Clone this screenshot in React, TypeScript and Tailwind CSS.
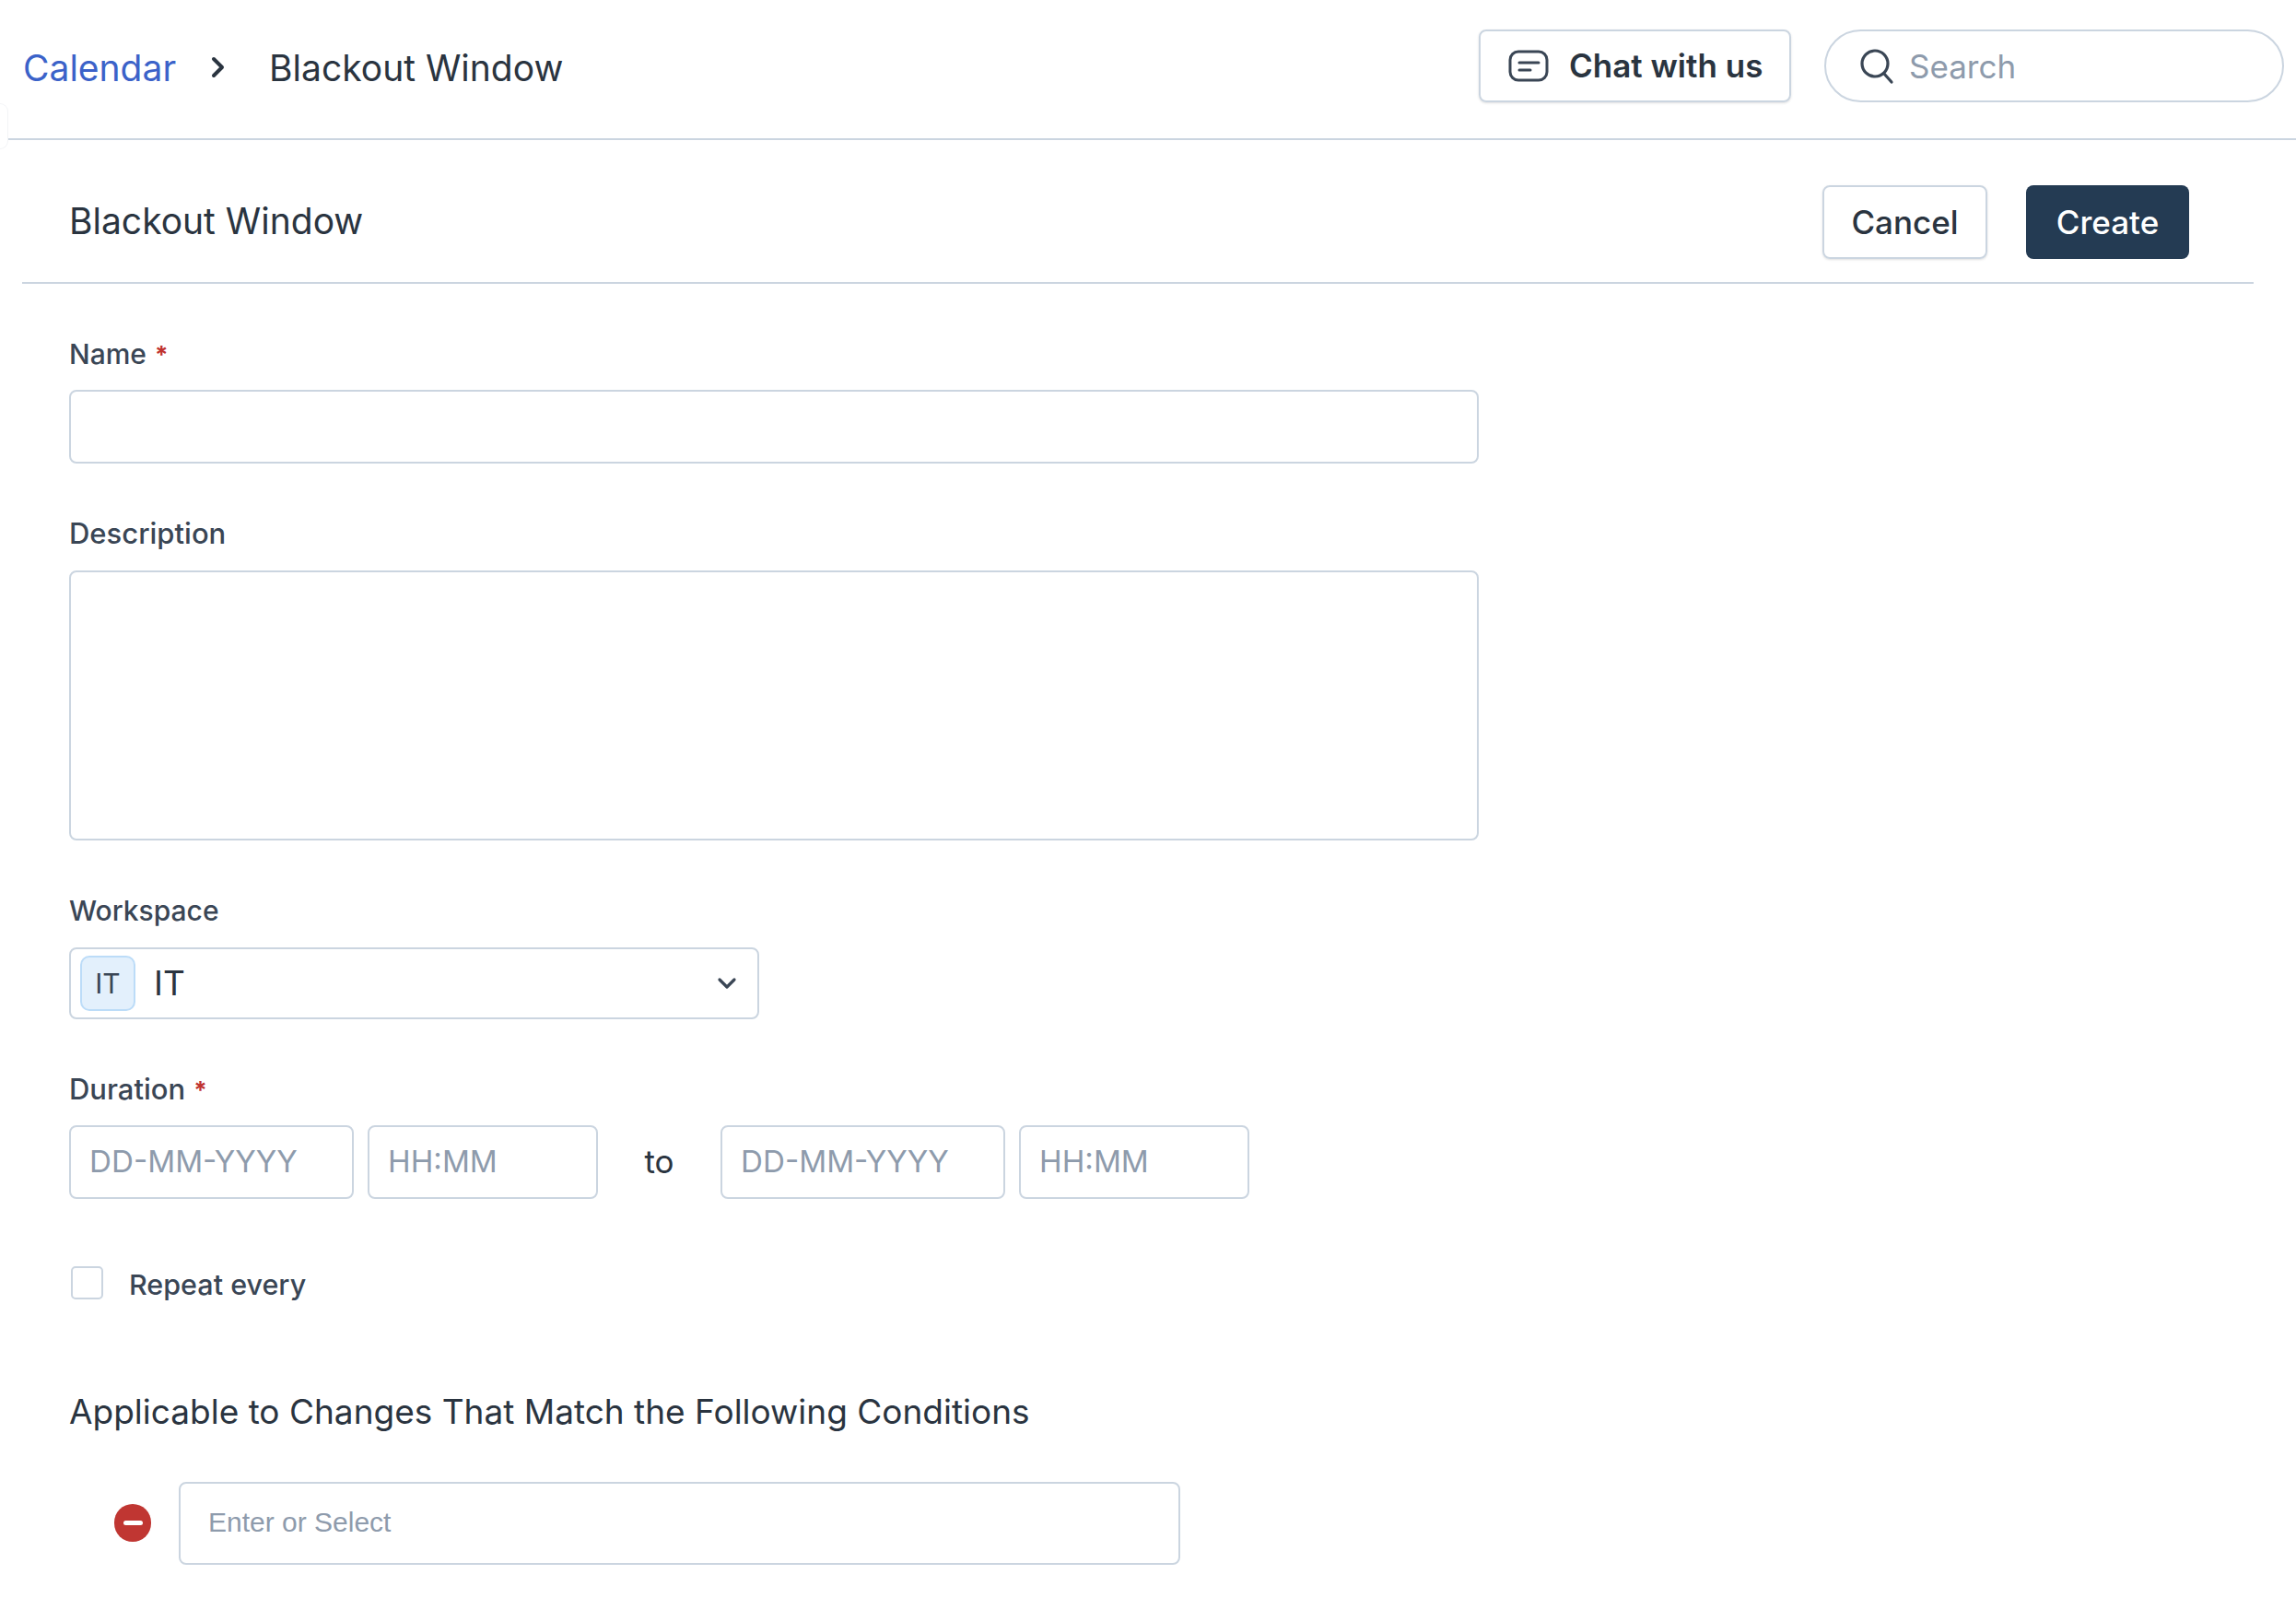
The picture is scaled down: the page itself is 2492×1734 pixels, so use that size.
import React from "react";

const font = { fontFamily: "Inter, 'Liberation Sans', sans-serif" };

function Label({ text, required, className = "" }: { text: string; required?: boolean; className?: string }) {
  return (
    <div className={`h-[40px] flex items-center font-medium text-[#3a4655] ${className}`}>
      {text}
      {required && <span className="ml-[9px] text-[#c0322f] text-[26px] font-bold">*</span>}
    </div>
  );
}

function Field({ placeholder, className = "" }: { placeholder: string; className?: string }) {
  return (
    <div className={`h-[80px] border-2 border-[#cbd5e0] rounded-[8px] flex items-center px-[20px] text-[33.2px] text-[#8e9bac] bg-white ${className}`}>
      {placeholder}
    </div>
  );
}

export default function App() {
  return (
    <div style={font} className="w-[2492px] h-[1734px] overflow-hidden bg-white relative text-[#2a3440]">
      <div className="absolute left-0 top-[112px] w-[9px] h-[50px] rounded-r-[10px] bg-white border border-[#f3f4f6] border-l-0" />

      <header className="ml-[8px] h-[152px] border-b-2 border-[#cbd5e0] flex items-center pl-[17px] pr-[13px] pb-[7px]">
        <a className="text-[39px] text-[#3b62c9] mt-[6px]">Calendar</a>
        <svg width="24" height="30" viewBox="0 0 24 30" className="ml-[33px] mr-[44px] mt-[2px]" fill="none" stroke="#2a3440" strokeWidth="4" strokeLinecap="round" strokeLinejoin="round">
          <path d="M8 6l9 9-9 9" />
        </svg>
        <span className="text-[39px] mt-[6px]">Blackout Window</span>
        <div className="ml-auto flex gap-[36px]">
          <button className="w-[339px] h-[79px] border-2 border-[#cbd5e0] rounded-[8px] flex items-center pl-[30px] gap-[22px] text-[35px] font-semibold shadow-sm">
            <svg width="44" height="36" viewBox="0 0 44 36" fill="none" stroke="#3a4655" strokeWidth="3">
              <rect x="2" y="2" width="40" height="31" rx="9" />
              <path d="M12 14h21M12 22h12" strokeLinecap="round" />
            </svg>
            Chat with us
          </button>
          <div className="w-[499px] h-[79px] border-2 border-[#cbd5e0] rounded-full flex items-center pl-[36px] gap-[16px] text-[35px] text-[#8e9bac]">
            <svg width="38" height="40" viewBox="0 0 38 40" fill="none" stroke="#3a4655" strokeWidth="3.2" strokeLinecap="round">
              <circle cx="17" cy="17" r="14" />
              <path d="M27 28l8 9" />
            </svg>
            <span className="mt-[2px]">Search</span>
          </div>
        </div>
      </header>

      <section className="ml-[24px] w-[2422px] h-[156px] border-b-2 border-[#cbd5e0] flex items-center pl-[51px] pr-[70px] pt-[24px]">
        <h1 className="text-[39px] -mt-[2px]">Blackout Window</h1>
        <div className="ml-auto flex gap-[42px]">
          <button className="w-[179px] h-[80px] border-2 border-[#cbd5e0] rounded-[8px] text-[35px] font-medium shadow-sm">Cancel</button>
          <button className="w-[177px] h-[80px] bg-[#243b53] text-white rounded-[8px] text-[35px] font-medium">Create</button>
        </div>
      </section>

      <main className="pl-[75px]">
        <Label text="Name" required className="mt-[56px] text-[30px]" />
        <Field placeholder="" className="w-[1530px] mt-[19px]" />

        <Label text="Description" className="mt-[56px] text-[31px]" />
        <Field placeholder="" className="w-[1530px] !h-[293px] mt-[20px]" />

        <Label text="Workspace" className="mt-[56px] text-[30px]" />
        <div className="w-[749px] h-[78px] mt-[20px] border-2 border-[#cbd5e0] rounded-[8px] flex items-center pl-[10px] pr-[22px] text-[37px]">
          <span className="w-[60px] h-[60px] rounded-[10px] bg-[#e3f0fc] border-2 border-[#bcdcf8] flex items-center justify-center text-[30px] text-[#3a4655]">IT</span>
          <span className="ml-[20px]">IT</span>
          <svg className="ml-auto" width="22" height="14" viewBox="0 0 22 14" fill="none" stroke="#3a4655" strokeWidth="3.2" strokeLinecap="round" strokeLinejoin="round">
            <path d="M3 3l8 8 8-8" />
          </svg>
        </div>

        <Label text="Duration" required className="mt-[56px] text-[31px]" />
        <div className="flex items-center mt-[19px]">
          <Field placeholder="DD-MM-YYYY" className="w-[309px]" />
          <Field placeholder="HH:MM" className="w-[250px] ml-[15px]" />
          <span className="w-[133px] text-center text-[35px] -mt-[2px]">to</span>
          <Field placeholder="DD-MM-YYYY" className="w-[309px]" />
          <Field placeholder="HH:MM" className="w-[250px] ml-[15px]" />
        </div>

        <div className="flex items-start mt-[73px] ml-[2px]">
          <span className="w-[35px] h-[36px] border-2 border-[#cbd5e0] rounded-[5px]" />
          <span className="ml-[28px] -mt-[3px] text-[30.5px] font-medium text-[#3a4655]">Repeat every</span>
        </div>

        <h2 className="text-[37px] mt-[91px] h-[48px] leading-[48px]">Applicable to Changes That Match the Following Conditions</h2>

        <div className="flex items-center mt-[52px] ml-[49px]">
          <span className="w-[40px] h-[41px] rounded-full bg-[#c03632] flex items-center justify-center">
            <span className="w-[21px] h-[5px] rounded-full bg-white" />
          </span>
          <div className="ml-[30px] w-[1087px] h-[90px] border-2 border-[#cbd5e0] rounded-[8px] flex items-center px-[30px] pb-[2px] text-[30px] text-[#8e9bac] font-['Liberation_Sans']">
            Enter or Select
          </div>
        </div>
      </main>
    </div>
  );
}
